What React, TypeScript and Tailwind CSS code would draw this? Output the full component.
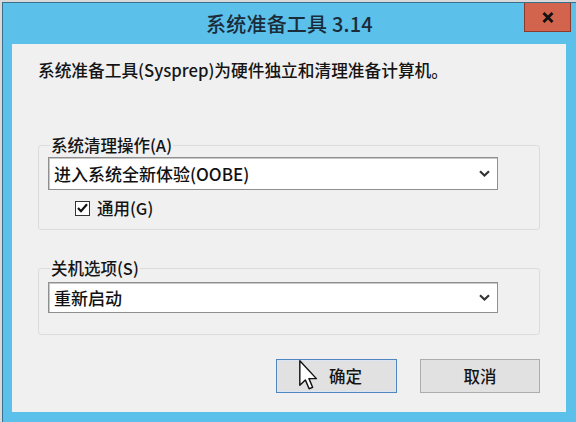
import React from "react";

const FONT = { fontFamily: '"Noto Sans CJK SC", "Noto Sans", sans-serif' };

function Chevron() {
	return (
		<svg width="11" height="7" viewBox="0 0 11 7" className="shrink-0">
			<path d="M1 1.2 L5.5 5.5 L10 1.2" fill="none" stroke="#333" strokeWidth="2.2" />
		</svg>
	);
}

function Combo({ value, height }: { value: string; height: string }) {
	return (
		<div
			className={`flex items-center justify-between w-[450px] ${height} bg-white border border-[#8f8f8f] shadow-[inset_1px_1px_0_#c8c8c8] pl-[5px] pr-[7px]`}
		>
			<span className="text-[17px] leading-none text-[#111]">{value}</span>
			<Chevron />
		</div>
	);
}

function Cursor() {
	return (
		<svg width="19" height="30" viewBox="0 0 12 19" className="absolute left-[22px] top-[0px]">
			<path
				d="M0.5 0.5 L0.5 16 L4 12.6 L6.4 18.2 L8.6 17.3 L6.3 11.8 L11 11.8 Z"
				fill="#fff"
				stroke="#111"
				strokeWidth="0.9"
				strokeLinejoin="round"
			/>
		</svg>
	);
}

export default function App() {
	return (
		<div className="w-[576px] h-[422px] overflow-hidden bg-[#d9d9d9] pt-[2px] pl-[2px] font-medium" style={FONT}>
			<div className="w-[580px] h-[430px] bg-[#5bc0ea] border-t border-l border-[#3a6f8c] flex flex-col">
				{/* title bar */}
				<div className="relative h-[41px] shrink-0 flex items-center justify-center pr-[6px]">
					<span className="text-[20px] leading-none text-[#1a2c3a] tracking-[0.2px]">系统准备工具 3.14</span>
					<div className="absolute right-[11px] top-0 w-[47px] h-[29px] bg-[#d2634c] border border-t-0 border-[#8a3a2c] flex items-center justify-center">
						<svg width="12" height="11" viewBox="0 0 12 11">
							<path d="M1.5 1 L10.5 10 M10.5 1 L1.5 10" stroke="#111" strokeWidth="2.8" />
						</svg>
					</div>
				</div>

				{/* client area */}
				<div className="ml-[9px] w-[554px] h-[368px] bg-[#f0f0f0] pt-[14px] pl-[26px] text-[#141414]">
					<p className="text-[16.7px] leading-[24px]">系统准备工具(Sysprep)为硬件独立和清理准备计算机。</p>

					<fieldset className="mt-[53px] w-[502px] h-[95px] border border-[#dcdcdc] rounded-[3px] px-[9px]">
						<legend className="text-[16.5px] leading-[20px] ml-[2px] px-[1px]">系统清理操作(A)</legend>
						<div className="mt-[2px]">
							<Combo value="进入系统全新体验(OOBE)" height="h-[33px]" />
						</div>
						<div className="mt-[10px] ml-[27px] flex items-center gap-[7px]">
							<div className="w-[15px] h-[15px] border border-[#333] bg-white flex items-center justify-center">
								<svg width="11" height="10" viewBox="0 0 11 10">
									<path d="M1 5 L4 8.2 L10 1.2" fill="none" stroke="#111" strokeWidth="2.2" />
								</svg>
							</div>
							<span className="text-[16.5px] leading-none">通用(G)</span>
						</div>
					</fieldset>

					<fieldset className="mt-[28px] w-[502px] h-[77px] border border-[#dcdcdc] rounded-[3px] px-[9px]">
						<legend className="text-[16.5px] leading-[20px] ml-[2px] px-[1px]">关机选项(S)</legend>
						<div className="mt-[4px]">
							<Combo value="重新启动" height="h-[31px]" />
						</div>
					</fieldset>

					<div className="mt-[24px] ml-[238px] flex gap-[23px]">
						<div className="relative w-[121px] h-[34px] bg-[#e1e1e1] border border-[#4f86c0] shadow-[inset_0_0_0_1px_#dbe6f2] flex items-center justify-center text-[16.5px]">
							<span className="ml-[18px]">确定</span>
							<Cursor />
						</div>
						<div className="w-[120px] h-[34px] bg-[#e1e1e1] border border-[#adadad] flex items-center justify-center text-[16.5px]">
							取消
						</div>
					</div>
				</div>
			</div>
		</div>
	);
}
